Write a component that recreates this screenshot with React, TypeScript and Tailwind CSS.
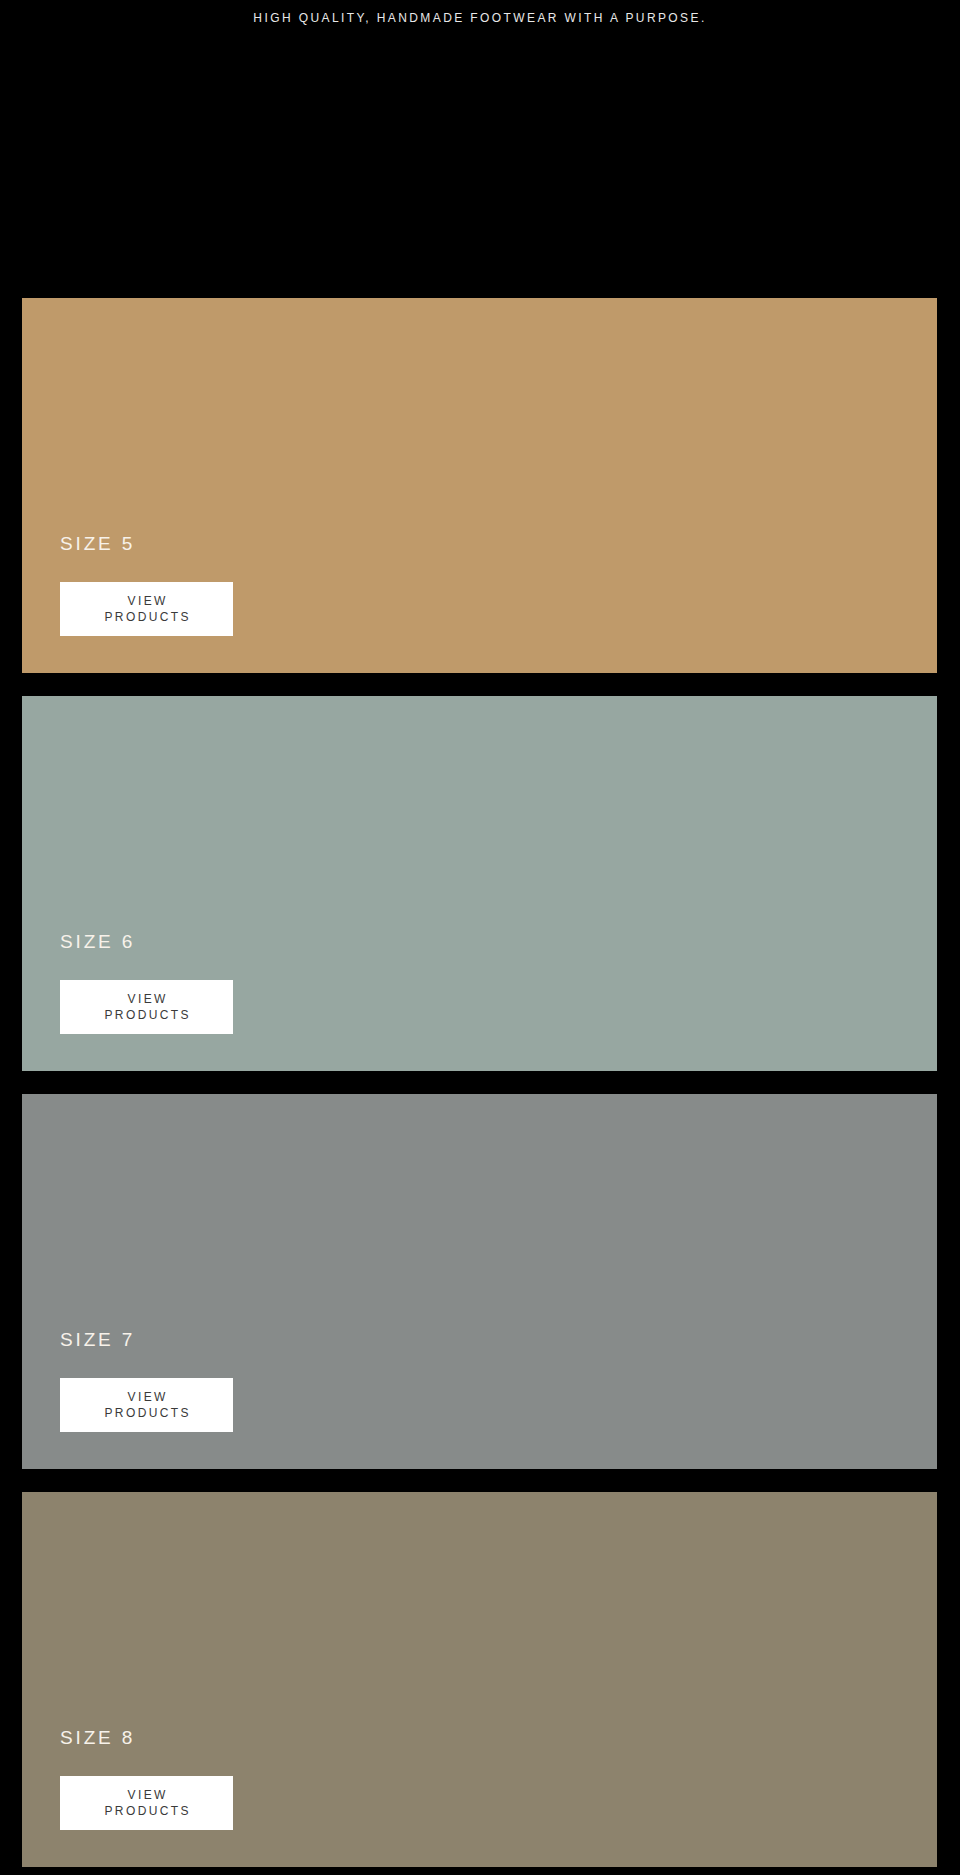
import React from "react";

const sizes = [
  { label: "SIZE 5", bg: "bg-[#bf9a6a]" },
  { label: "SIZE 6", bg: "bg-[#97a7a1]" },
  { label: "SIZE 7", bg: "bg-[#878b8a]" },
  { label: "SIZE 8", bg: "bg-[#8d836d]" },
];

export default function App() {
  return (
    <main
      className="min-h-screen bg-black"
      style={{ fontFamily: '"Liberation Sans", Arial, sans-serif' }}
    >
      <header className="h-[298px] pt-[11px]">
        <p className="text-center text-[12px] leading-[14px] tracking-[0.2em] text-[#e8e8e8]">
          HIGH QUALITY, HANDMADE FOOTWEAR WITH A PURPOSE.
        </p>
      </header>

      <div className="flex flex-col gap-[23px] ml-[22px] mr-[23px] pb-[8px]">
        {sizes.map((s) => (
          <section
            key={s.label}
            className={`${s.bg} h-[375px] flex flex-col justify-end pl-[38px] pb-[37px]`}
          >
            <h2 className="text-[19px] leading-[20px] tracking-[0.15em] text-[#f7f2ea] font-normal">
              {s.label}
            </h2>
            <a
              href="#"
              className="mt-[28px] w-[173px] h-[54px] bg-white flex flex-col items-center justify-center text-[12px] leading-[16px] tracking-[0.2em] text-[#3a3a3a]"
            >
              <span className="pl-[0.2em]">VIEW</span>
              <span className="pl-[0.2em]">PRODUCTS</span>
            </a>
          </section>
        ))}
      </div>
    </main>
  );
}
